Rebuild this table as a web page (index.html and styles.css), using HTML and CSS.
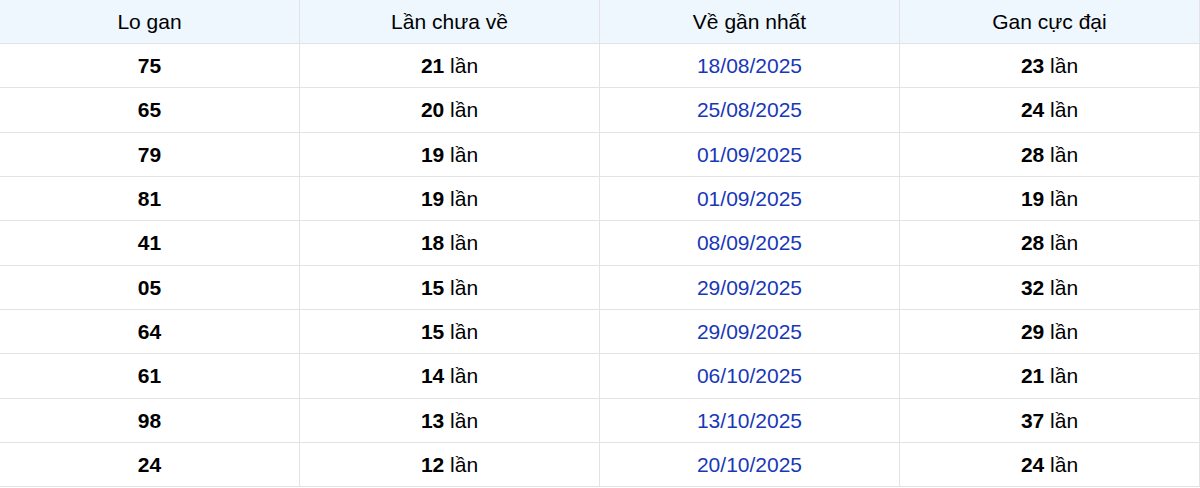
FILE: index.html
```html
<!DOCTYPE html>
<html lang="vi">
<head>
<meta charset="utf-8">
<title>Lo gan</title>
<link rel="stylesheet" href="styles.css">
</head>
<body>
<div class="table">
  <div class="cell head"><span>Lo gan</span></div>
  <div class="cell head"><span>Lần chưa về</span></div>
  <div class="cell head"><span>Về gần nhất</span></div>
  <div class="cell head"><span>Gan cực đại</span></div>

  <div class="cell"><span><b>75</b></span></div><div class="cell"><span><b>21</b> lần</span></div><div class="cell date"><span>18/08/2025</span></div><div class="cell"><span><b>23</b> lần</span></div>
  <div class="cell"><span><b>65</b></span></div><div class="cell"><span><b>20</b> lần</span></div><div class="cell date"><span>25/08/2025</span></div><div class="cell"><span><b>24</b> lần</span></div>
  <div class="cell"><span><b>79</b></span></div><div class="cell"><span><b>19</b> lần</span></div><div class="cell date"><span>01/09/2025</span></div><div class="cell"><span><b>28</b> lần</span></div>
  <div class="cell"><span><b>81</b></span></div><div class="cell"><span><b>19</b> lần</span></div><div class="cell date"><span>01/09/2025</span></div><div class="cell"><span><b>19</b> lần</span></div>
  <div class="cell"><span><b>41</b></span></div><div class="cell"><span><b>18</b> lần</span></div><div class="cell date"><span>08/09/2025</span></div><div class="cell"><span><b>28</b> lần</span></div>
  <div class="cell"><span><b>05</b></span></div><div class="cell"><span><b>15</b> lần</span></div><div class="cell date"><span>29/09/2025</span></div><div class="cell"><span><b>32</b> lần</span></div>
  <div class="cell"><span><b>64</b></span></div><div class="cell"><span><b>15</b> lần</span></div><div class="cell date"><span>29/09/2025</span></div><div class="cell"><span><b>29</b> lần</span></div>
  <div class="cell"><span><b>61</b></span></div><div class="cell"><span><b>14</b> lần</span></div><div class="cell date"><span>06/10/2025</span></div><div class="cell"><span><b>21</b> lần</span></div>
  <div class="cell"><span><b>98</b></span></div><div class="cell"><span><b>13</b> lần</span></div><div class="cell date"><span>13/10/2025</span></div><div class="cell"><span><b>37</b> lần</span></div>
  <div class="cell"><span><b>24</b></span></div><div class="cell"><span><b>12</b> lần</span></div><div class="cell date"><span>20/10/2025</span></div><div class="cell"><span><b>24</b> lần</span></div>
</div>
</body>
</html>
```
FILE: styles.css
```css
html, body {
  margin: 0;
  padding: 0;
  background: #ffffff;
}
body {
  font-family: "Liberation Sans", Arial, sans-serif;
  font-size: 21px;
  color: #000000;
}
.table {
  display: grid;
  grid-template-columns: repeat(4, 300px);
  grid-template-rows: 44px repeat(10, 44.33px);
  width: 1200px;
}
.cell {
  box-sizing: border-box;
  display: flex;
  align-items: center;
  justify-content: center;
  border-right: 1px solid #e3e3e3;
  border-bottom: 1px solid #e3e3e3;
  line-height: 24px;
  padding-top: 1px;
}
.head {
  background: #eef6fe;
  padding-top: 0;
}
.cell b {
  font-weight: 700;
}
.date {
  color: #1838b8;
}
```
